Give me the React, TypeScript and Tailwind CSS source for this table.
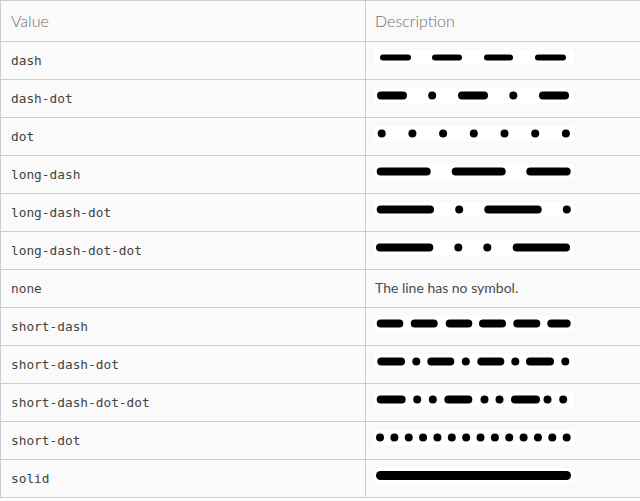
import React from "react";

type Seg = [number, number];

const dots = (start: number, step: number, n: number, d = 8): Seg[] =>
  Array.from({ length: n }, (_, i) => {
    const c = start + step * i;
    return [c - d / 2, c + d / 2] as Seg;
  });
const dot = (c: number, d = 8): Seg => [c - d / 2, c + d / 2];

const rows: { value: string; segs?: Seg[]; w?: number; text?: string }[] = [
  { value: "dash", segs: [[6, 37], [58, 88], [110, 139], [161, 192]], w: 6 },
  { value: "dash-dot", segs: [[3, 33], dot(58.2), [84, 114], dot(139.3), [165, 195]] },
  { value: "dot", segs: dots(7.7, 30.7, 7) },
  { value: "long-dash", segs: [[2.7, 56.7], [77.7, 131.7], [152.3, 196.7]] },
  { value: "long-dash-dot", segs: [[2.7, 60], dot(85.2), [110.3, 167.7], dot(192.8)] },
  { value: "long-dash-dot-dot", segs: [[2, 59.3], dot(84.3), dot(113.3), [138.7, 196]] },
  { value: "none", text: "The line has no symbol." },
  { value: "short-dash", segs: [[2.7, 29.3], [36.7, 63.7], [71.7, 98.3], [105, 132], [139.3, 166.3], [173.3, 196.7]] },
  { value: "short-dash-dot", segs: [[3.3, 31], dot(42.3), [53.3, 80.3], dot(91.8), [103.3, 130.3], dot(141.3), [152, 180], dot(191.3)] },
  { value: "short-dash-dot-dot", segs: [[2.7, 31.7], dot(43.2), dot(58.8), [70.3, 98.3], dot(110.5), dot(125.5), [137, 166], dot(173.5), dot(189.2)] },
  { value: "short-dot", segs: dots(6, 14.36, 14) },
  { value: "solid", segs: [[2, 197]], w: 9 },
];

function Pattern({ segs, w = 8 }: { segs: Seg[]; w?: number }) {
  return (
    <svg width={200} height={15} viewBox="0 0 200 15" className="block bg-white">
      {segs.map(([a, b], i) => (
        <line
          key={i}
          x1={a + w / 2}
          x2={Math.max(a + w / 2, b - w / 2)}
          y1={7.5}
          y2={7.5}
          stroke="#000"
          strokeWidth={w}
          strokeLinecap="round"
        />
      ))}
    </svg>
  );
}

export default function App() {
  return (
    <div className="w-[640px] h-[501px] bg-white overflow-hidden">
      <div className="grid grid-cols-[365px_1fr] border-t border-l border-[#cccccc] bg-[#fafafa]">
        <div className="h-[41px] border-b border-r border-[#cccccc] pl-[10px] pb-[1px] flex items-center text-[16px] font-light text-[#6e6e6e] font-['Lato',sans-serif]">
          Value
        </div>
        <div className="h-[41px] border-b border-[#cccccc] pl-[9px] pb-[1px] flex items-center text-[16px] font-light text-[#6e6e6e] font-['Lato',sans-serif]">
          Description
        </div>
        {rows.map((r) => (
          <React.Fragment key={r.value}>
            <div className="h-[38px] border-b border-r border-[#cccccc] pl-[10px] flex items-center text-[12.8px] text-[#444444] font-['DejaVu_Sans_Mono',monospace]">
              {r.value}
            </div>
            <div className="h-[38px] border-b border-[#cccccc]">
              {r.segs ? (
                <div className="pl-[8px] pt-[8px]">
                  <Pattern segs={r.segs} w={r.w} />
                </div>
              ) : (
                <div className="h-full pl-[9px] pb-[2px] flex items-center text-[14px] text-[#4c4c4c] font-['Lato',sans-serif]">
                  {r.text}
                </div>
              )}
            </div>
          </React.Fragment>
        ))}
      </div>
    </div>
  );
}
